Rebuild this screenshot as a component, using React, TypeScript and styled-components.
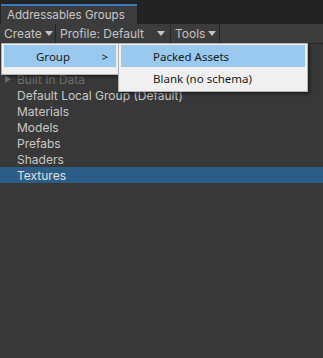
import styled, { createGlobalStyle } from "styled-components";

const Global = createGlobalStyle`
  html, body { margin: 0; padding: 0; background: #383838; }
  #root { width: 323px; height: 358px; }
`;

const Window = styled.div`
  position: relative;
  width: 323px;
  height: 358px;
  background: #383838;
  font-family: Inter, "Noto Sans", sans-serif;
  font-size: 12px;
  color: #d2d2d2;
  display: flex;
  flex-direction: column;
  overflow: hidden;
`;

const TabStrip = styled.div`
  height: 24px;
  background: #232323;
  display: flex;
  align-items: flex-end;
  padding-left: 1px;
`;

const Tab = styled.div`
  height: 20px;
  width: 136px;
  box-sizing: border-box;
  background: #3c3c3c;
  border-top: 2px solid #3a79bb;
  padding-left: 6px;
  display: flex;
  align-items: center;
  font-size: 11.6px;
  color: #c8c8c8;
`;

const Toolbar = styled.div`
  height: 19px;
  background: #3c3c3c;
  border-bottom: 1px solid #232323;
  display: flex;
  align-items: center;
`;

const ToolButton = styled.div<{ $w: number }>`
  width: ${(p) => p.$w}px;
  height: 100%;
  box-sizing: border-box;
  padding-left: 4px;
  display: flex;
  align-items: center;
  gap: 3px;
  border-right: 1px solid #262626;
  color: #c4c4c4;
`;

const Caret = styled.span`
  width: 0;
  height: 0;
  border-left: 4px solid transparent;
  border-right: 4px solid transparent;
  border-top: 5px solid #c4c4c4;
  margin-left: auto;
  margin-right: 5px;
`;

const List = styled.div`
  padding-top: 27px;
  display: flex;
  flex-direction: column;
`;

const Row = styled.div<{ $selected?: boolean; $dim?: boolean }>`
  height: 16px;
  display: flex;
  align-items: center;
  padding-left: 17px;
  background: ${(p) => (p.$selected ? "#2c5d87" : "transparent")};
  color: ${(p) => (p.$dim ? "#6e6e6e" : p.$selected ? "#e0e0e0" : "#c8c8c8")};
  position: relative;
`;

const Fold = styled.span`
  position: absolute;
  left: 5px;
  width: 0;
  height: 0;
  border-top: 4px solid transparent;
  border-bottom: 4px solid transparent;
  border-left: 6px solid #6e6e6e;
`;

const Menu = styled.div<{ $x: number; $y: number; $w: number }>`
  position: absolute;
  left: ${(p) => p.$x}px;
  top: ${(p) => p.$y}px;
  width: ${(p) => p.$w}px;
  box-sizing: border-box;
  background: #f0f0f0;
  border: 1px solid #b4b4b4;
  padding: 1px 2px 2px;
  box-shadow: 2px 2px 3px rgba(0, 0, 0, 0.45);
  font-family: "Noto Sans", "Noto Sans CJK KR", sans-serif;
  font-size: 11.5px;
  color: #1a1a1a;
`;

const Item = styled.div<{ $active?: boolean }>`
  height: 22px;
  display: flex;
  align-items: center;
  padding-left: 32px;
  padding-right: 8px;
  background: ${(p) => (p.$active ? "#99c9ef" : "transparent")};
`;

const Arrow = styled.span`
  margin-left: auto;
  font-size: 11px;
`;

const Spacer = styled.div`
  height: 5px;
`;

export default function App() {
  return (
    <>
      <Global />
      <Window>
        <TabStrip>
          <Tab>Addressables Groups</Tab>
        </TabStrip>
        <Toolbar>
          <ToolButton $w={56}>
            Create
            <Caret />
          </ToolButton>
          <ToolButton $w={115}>
            Profile: Default
            <Caret />
          </ToolButton>
          <ToolButton $w={49}>
            Tools
            <Caret />
          </ToolButton>
        </Toolbar>
        <List>
          <Row $dim>
            <Fold />
            Built In Data
          </Row>
          <Row>Default Local Group (Default)</Row>
          <Row>Materials</Row>
          <Row>Models</Row>
          <Row>Prefabs</Row>
          <Row>Shaders</Row>
          <Row $selected>Textures</Row>
        </List>
        <Menu $x={1} $y={43} $w={118}>
          <Item $active>
            Group
            <Arrow>&gt;</Arrow>
          </Item>
          <Spacer />
        </Menu>
        <Menu $x={118} $y={43} $w={190}>
          <Item $active>Packed Assets</Item>
          <Item>Blank (no schema)</Item>
        </Menu>
      </Window>
    </>
  );
}
